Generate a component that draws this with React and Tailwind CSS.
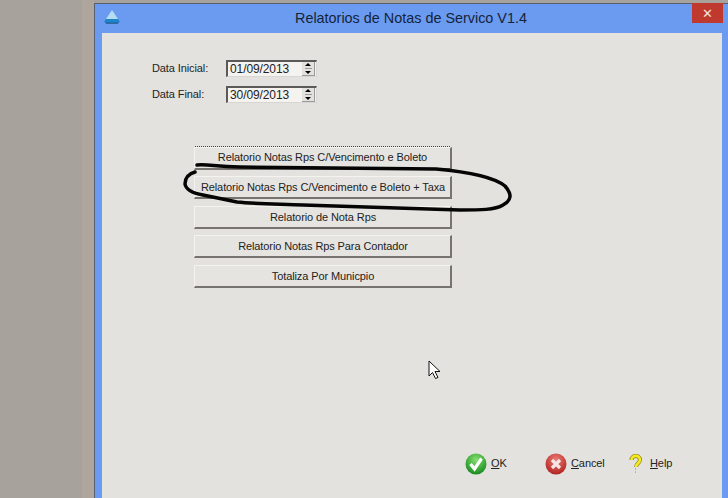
import React from 'react'

const reports = [
    'Relatorio Notas Rps C/Vencimento e Boleto',
    'Relatorio Notas Rps C/Vencimento e Boleto + Taxa',
    'Relatorio de Nota Rps',
    'Relatorio Notas Rps Para Contador',
    'Totaliza Por Municpio',
]

function DateField({ label, value }) {
    return (
        <div className="flex items-center h-[17px]">
            <span className="w-[74px] text-[11px] tracking-[-0.1px] text-[#222]">{label}</span>
            <div className="w-[91px] h-[17px] flex items-center justify-between bg-[#f4f3f0] border-t-2 border-l-2 border-[#5c5a58] border-r border-b border-r-[#d8d6d2] border-b-[#d8d6d2] pl-[2px] pr-[1px]">
                <span className="text-[12px] leading-none text-[#222] tracking-[-0.1px]">{value}</span>
                <div className="flex flex-col items-center w-[13px] h-[14px] bg-[#e4e2de] justify-center gap-[2px] border-r border-b border-[#999]">
                    <span className="w-0 h-0 border-x-[3px] border-x-transparent border-b-[3px] border-b-black" />
                    <span className="w-[7px] h-px bg-[#999]" />
                    <span className="w-0 h-0 border-x-[3px] border-x-transparent border-t-[3px] border-t-black" />
                </div>
            </div>
        </div>
    )
}

function ReportButton({ text, focused }) {
    return (
        <button className="w-[258px] h-[23px] flex items-center justify-center bg-[#e6e4e0] border border-t-[#f4f3f0] border-l-[#f4f3f0] border-r-[#77736f] border-b-[#77736f] border-b-2 border-r-2 text-[11px] tracking-[-0.1px] whitespace-nowrap text-[#222]">
            <span className={focused ? 'w-full border-t border-dotted border-[#444] -mt-[3px] pt-[2px]' : 'pt-[1px] pl-[1px]'}>{text}</span>
        </button>
    )
}

function OkIcon() {
    return (
        <svg width="22" height="22" viewBox="0 0 22 22">
            <defs>
                <radialGradient id="ok" cx="50%" cy="30%" r="75%">
                    <stop offset="0%" stopColor="#86e070" />
                    <stop offset="100%" stopColor="#0f8418" />
                </radialGradient>
            </defs>
            <circle cx="11" cy="11" r="10.5" fill="url(#ok)" />
            <path d="M5.5 11l4 5 7-10.5" fill="none" stroke="#fff" strokeWidth="3.2" />
        </svg>
    )
}

function CancelIcon() {
    return (
        <svg width="22" height="22" viewBox="0 0 22 22">
            <defs>
                <radialGradient id="cancel" cx="50%" cy="30%" r="75%">
                    <stop offset="0%" stopColor="#ea7c74" />
                    <stop offset="100%" stopColor="#ad1c1c" />
                </radialGradient>
            </defs>
            <circle cx="11" cy="11" r="10.5" fill="url(#cancel)" />
            <path d="M7 7l8 8M15 7l-8 8" fill="none" stroke="#f6e6e2" strokeWidth="3.2" />
        </svg>
    )
}

function HelpIcon() {
    return (
        <svg width="13" height="19" viewBox="0 0 13 19">
            <path d="M2.5 6c0-5.5 8.5-5.5 8.5 0 0 3-4 3.500-4 7" fill="none" stroke="#8d8420" strokeWidth="4" />
            <path d="M7 16.500h-1" fill="none" stroke="#8d8420" strokeWidth="4" />
            <path d="M2.500 6c0-5.500 8.500-5.500 8.500 0 0 3-4 3.500-4 7" fill="none" stroke="#f7ea1e" strokeWidth="2.600" />
            <path d="M7 16.500h-1" fill="none" stroke="#f7ea1e" strokeWidth="2.600" />
        </svg>
    )
}

export default function App() {
    return (
        <div className="relative w-[728px] h-[498px] overflow-hidden flex bg-[#a8a29c] font-['Liberation_Sans',sans-serif]">
            <div className="w-[82px] shrink-0" />
            <div className="w-[12px] shrink-0 bg-[#aea59d]" />
            <div className="flex-1 mt-[3px] flex flex-col bg-[#6a9bf0] border-t border-l border-[#56606e]">
                <div className="h-[29px] shrink-0 relative flex items-center justify-center pl-[6px] pr-[7px]">
                    <svg className="absolute left-[9px] top-[6px]" width="16" height="15" viewBox="0 0 16 15">
                        <path d="M8 0L14 9H2z" fill="#b6dcf2" />
                        <path d="M2 9h12l2 3H0z" fill="#1c86c8" />
                        <path d="M1 12h14l-1 2H2z" fill="#2c6aa8" />
                    </svg>
                    <span className="text-[14.4px] text-[#15233a]">Relatorios de Notas de Servico V1.4</span>
                    <div className="absolute right-[5px] -top-px w-[31px] h-[20px] flex items-center justify-center bg-[#c0392f] text-[#f6e0d8] text-[13px] leading-none">✕</div>
                </div>
                <div className="flex-1 ml-[7px] mr-[6px] bg-[#e4e2de] flex flex-col">
                    <div className="flex flex-col gap-[8.5px] pl-[50px] pt-[27px]">
                        <DateField label="Data Inicial:" value="01/09/2013" />
                        <DateField label="Data Final:" value="30/09/2013" />
                    </div>
                    <div className="flex flex-col gap-[6.5px] pl-[92px] pt-[44px]">
                        {reports.map((text, i) => (
                            <ReportButton key={text} text={text} focused={i === 0} />
                        ))}
                    </div>
                    <div className="mt-[165px] flex items-center pl-[363px] text-[11px] tracking-[-0.1px] text-[#222]">
                        <OkIcon />
                        <span className="ml-[4px] w-[54px]"><u>O</u>K</span>
                        <CancelIcon />
                        <span className="ml-[4px] w-[58px]"><u>C</u>ancel</span>
                        <HelpIcon />
                        <span className="ml-[8px]"><u>H</u>elp</span>
                    </div>
                </div>
            </div>

            <svg className="absolute left-0 top-0 pointer-events-none" width="728" height="498" viewBox="0 0 728 498">
                <path d="M197 165C210 164 215 167 240 167L436 169C470 172 495 178 505 186C512 194 512 200 503 205C495 210 480 210 460 210L303 205C280 204 255 204 237 202L203 195C192 193 186 190 185 184C185 178 188 174 195 172" fill="none" stroke="#050505" strokeWidth="3.5" strokeLinecap="round" strokeLinejoin="round" />
            </svg>
            <svg className="absolute left-[428px] top-[360px]" width="14" height="20" viewBox="0 0 14 20">
                <path d="M1 1v15l3.500-3.500 3 6 2.500-1-3-6H12z" fill="#fff" stroke="#111" strokeWidth="1" />
            </svg>
        </div>
    )
}
